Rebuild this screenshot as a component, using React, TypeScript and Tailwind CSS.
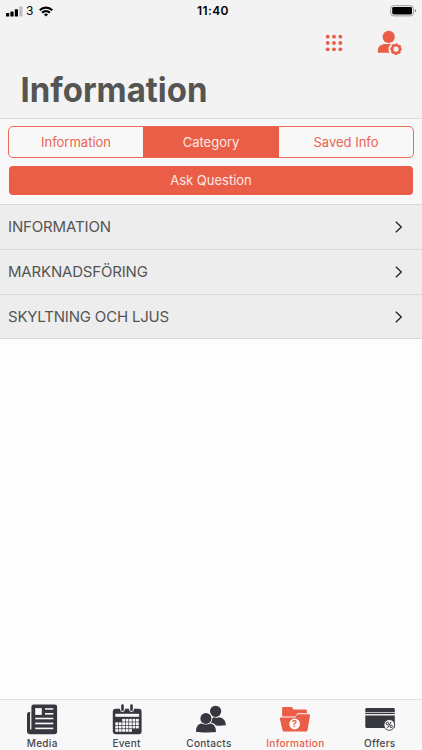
import React, { useState } from 'react'

interface Tab {
    label: string,
    icon: React.ReactNode,
}

const segments = [
    { label: 'Information', width: 'w-[134px]' },
    { label: 'Category', width: 'w-[136px]' },
    { label: 'Saved Info', width: 'w-[134px]' },
]

const categories = [
    { label: 'INFORMATION', height: 'h-[45px]', spacing: 'tracking-[-0.14px]' },
    { label: 'MARKNADSFÖRING', height: 'h-[45px]', spacing: 'tracking-[-0.18px]' },
    { label: 'SKYLTNING OCH LJUS', height: 'h-[44px] pt-px', spacing: 'tracking-[-0.18px]' },
]

function StatusBar() {
    return (
        <div className="grid h-[22px] grid-cols-3 items-center text-black">
            <div className="flex items-center pl-[6px]">
                <svg width="17" height="11" viewBox="0 0 17 11">
                    <rect x="0" y="7" width="3.2" height="3.5" rx="0.6" />
                    <rect x="4.4" y="5.5" width="3.2" height="5" rx="0.6" />
                    <rect x="8.8" y="3.2" width="3.2" height="7.3" rx="0.6" />
                    <rect x="13.3" y="0.5" width="3.2" height="10" rx="0.6" fill="#bdbdbd" />
                </svg>
                <span className="ml-[3px] w-[7px] text-[12px]">3</span>
                <svg className="ml-[6px]" width="14" height="11" viewBox="0 0 14 11" fill="none" stroke="#000" strokeWidth="2.2">
                    <path d="M0.8 4.2a8.8 8.8 0 0 1 12.4 0" />
                    <path d="M3.1 6.8a5.5 5.5 0 0 1 7.8 0" />
                    <path d="M7 10.6L4.9 8.6a3 3 0 0 1 4.2 0z" fill="#000" stroke="none" />
                </svg>
            </div>
            <div className="pl-[4px] text-center text-[12px] font-semibold tracking-[0.4px]">11:40</div>
            <div className="flex justify-end pr-[5px]">
                <svg width="27" height="12" viewBox="0 0 27 12">
                    <rect x="0.7" y="0.7" width="22.7" height="10.2" rx="2.8" fill="none" stroke="#9a9a9a" />
                    <rect x="2.2" y="2.1" width="19.8" height="7.4" rx="1.4" />
                    <path d="M24.8 4.1c1.9.4 1.9 3 0 3.4z" fill="#8a8a8a" />
                </svg>
            </div>
        </div>
    )
}

function GridIcon() {
    return (
        <svg width="18" height="18" viewBox="0 0 18 18" fill="#ea5d47">
            {[2.7, 9, 15.3].map((y) => [2.7, 9, 15.3].map((x) => <circle key={`${x}-${y}`} cx={x} cy={y} r="1.9" />))}
        </svg>
    )
}

function UserSettingsIcon() {
    return (
        <svg width="26" height="26" viewBox="0 0 26 26" fill="#ea5d47">
            <circle cx="11.7" cy="6.9" r="6.1" />
            <path d="M0.8 22.7v-2.2c0-4.4 3.4-6.6 7.7-6.6h5.8c-2.8 1.8-3.5 5.6-1.8 8.8z" />
            <circle cx="19" cy="19.1" r="3.9" fill="none" stroke="#ea5d47" strokeWidth="2.5" />
            <circle cx="19" cy="19.1" r="5.2" fill="none" stroke="#ea5d47" strokeWidth="1.3" strokeDasharray="2.6 1.484" strokeDashoffset="1.3" />
        </svg>
    )
}

function MediaIcon() {
    return (
        <svg width="32" height="32" viewBox="0 0 32 32" fill="#36373f">
            <path d="M8.5 1.4h20.3a2.3 2.3 0 0 1 2.3 2.3v24.8a2.8 2.8 0 0 1-2.8 2.8H4.2a3.3 3.3 0 0 1-3.2-3.3V11.2a2.2 2.2 0 0 1 2.2-2.2h.9v17.4h1.3V3.7a2.3 2.3 0 0 1 2.3-2.3z" />
            <g fill="#f8f8f8">
                <rect x="9.2" y="5.1" width="6.6" height="6.8" />
                <rect x="19" y="5.2" width="8.3" height="1.5" />
                <rect x="19" y="10" width="8.3" height="1.6" />
                <rect x="9.2" y="14.7" width="18.1" height="1.6" />
                <rect x="9.2" y="19.6" width="18.1" height="1.7" />
                <rect x="9.2" y="24.6" width="18.1" height="1.6" />
            </g>
        </svg>
    )
}

// cells [first, last] that each row of the calendar fills
const calendarRows = [[2, 6], [0, 6], [0, 6], [0, 4]]

function EventIcon() {
    return (
        <svg width="32" height="32" viewBox="0 0 32 32" fill="#36373f">
            <rect x="1.8" y="5.8" width="28.8" height="25.5" rx="3" />
            <rect x="4.3" y="10.8" width="23.8" height="3" fill="#f8f8f8" />
            {[11.5, 20.5].map((x) => (
                <g key={x}>
                    <rect x={x - 2.4} y="0.2" width="4.8" height="8.8" rx="2.4" fill="#f8f8f8" />
                    <rect x={x - 1.3} y="1.2" width="2.6" height="6.8" rx="1.3" />
                </g>
            ))}
            {calendarRows.map(([from, to], row) =>
                Array.from({ length: to - from + 1 }, (_, i) => (
                    <rect key={`${row}-${i}`} x={4.3 + (from + i) * 3.45} y={15.9 + row * 3.4} width="2.8" height="2.7" fill="#f8f8f8" />
                ))
            )}
        </svg>
    )
}

function ContactsIcon() {
    return (
        <svg width="32" height="32" viewBox="0 0 32 32" fill="#36373f">
            <circle cx="20.6" cy="8.3" r="5.6" />
            <path d="M16 22v-5.6c.8-1.2 1.8-2 3.6-2.2 1.8.8 2.5.8 4.4 0 4 .5 6.8 3.5 6.9 8-4 .6-10 .6-14.9-.2z" />
            <circle cx="10.9" cy="15.4" r="6.4" fill="#f8f8f8" />
            <path d="M0 30.5v-3.2c0-4.9 3-7.5 6.5-7.5h8.8c4 0 6.8 2.6 6.8 7.5v3.2z" fill="#f8f8f8" />
            <circle cx="10.9" cy="15.4" r="5.5" />
            <path d="M1.1 29.1v-1.3c0-4.3 2.2-7 5.5-7.3 2.5 1.3 6 1.3 8.6 0 3.3.3 5.7 3 5.7 7.3v1.3c-5.2.6-15 .6-19.8 0z" />
        </svg>
    )
}

function InformationIcon() {
    return (
        <svg width="32" height="32" viewBox="0 0 32 32" fill="#ea5d47">
            <path d="M3.1 13.5V5.3c0-.8.5-1.2 1.2-1.2h7.8c.8 0 1.2.4 1.6 1.1l.9 1.4h12c.8 0 1.3.5 1.3 1.3v2.3h-9.5l-2.2 3.3z" />
            <path d="M2.1 14.5h14.1l2.2-3.3h11.2c1 0 1.5.6 1.4 1.5l-2.5 14.5c-.2.9-.7 1.4-1.6 1.4H5.1c-.9 0-1.4-.5-1.6-1.4L0.9 16c-.2-.9.3-1.5 1.2-1.5z" />
            <circle cx="15.6" cy="21" r="5.4" fill="#f8f8f8" />
            <text x="15.6" y="24.2" textAnchor="middle" fontSize="9" fontWeight="700">?</text>
        </svg>
    )
}

function OffersIcon() {
    return (
        <svg width="32" height="32" viewBox="0 0 32 32" fill="#36373f">
            <path d="M1.3 9.1V6.5c0-.9.6-1.5 1.5-1.5h26.5c.9 0 1.5.6 1.5 1.5v2.6z" />
            <path d="M1.3 9.7h29.5v1.4H1.3z" />
            <path d="M1.3 12.4h29.5v11c0 .9-.6 1.5-1.5 1.5H2.8c-.9 0-1.5-.6-1.5-1.5z" />
            <circle cx="25.3" cy="21.9" r="5.4" fill="#f8f8f8" stroke="#36373f" strokeWidth="0.9" />
            <g fill="none" stroke="#36373f">
                <circle cx="23.4" cy="20.5" r="1.2" />
                <circle cx="27.2" cy="23.4" r="1.2" />
                <path d="M27.1 19l-3.6 5.9" />
            </g>
        </svg>
    )
}

const tabs: Tab[] = [
    { label: 'Media', icon: <MediaIcon /> },
    { label: 'Event', icon: <EventIcon /> },
    { label: 'Contacts', icon: <ContactsIcon /> },
    { label: 'Information', icon: <InformationIcon /> },
    { label: 'Offers', icon: <OffersIcon /> },
]

export default function App() {
    const [segment, setSegment] = useState('Category')
    const [tab, setTab] = useState('Information')

    return (
        <div className="flex h-[750px] w-[422px] flex-col overflow-hidden bg-[#fdfdfd] font-[Inter,'Liberation_Sans',sans-serif] text-[#555553]">
            <header className="flex h-[119px] flex-col border-b border-[#dadcdc] bg-[#f3f3f3]">
                <StatusBar />
                <div className="flex h-[42px] items-center justify-end gap-[34px] pr-[19px]">
                    <button><GridIcon /></button>
                    <button><UserSettingsIcon /></button>
                </div>
                <h1 className="pt-[5px] pl-[20px] text-[34px] leading-[42px] font-bold">
                    <svg className="block overflow-visible" width="187" height="42" fill="#555553">
                        <text x="0.5" y="33" textLength="187" lengthAdjust="spacingAndGlyphs">Information</text>
                    </svg>
                </h1>
            </header>

            <div className="flex h-[86px] flex-col gap-[8px] border-b border-[#d6d8d8] bg-[#f8f8f8] px-[8px] pt-[7px]">
                <div className="flex h-[32px] overflow-hidden rounded-[5px] border border-[#ea6a56]">
                    {segments.map((s) => (
                        <button
                            key={s.label}
                            onClick={() => setSegment(s.label)}
                            className={`pt-[2px] text-[13px] ${s.width} ${s.label === segment ? 'bg-[#ea5d47] text-[#fde9e5]' : 'text-[#e56652]'}`}
                        >
                            {s.label}
                        </button>
                    ))}
                </div>
                <button className="mx-px h-[29px] rounded-[4px] bg-[#ea5d47] pt-px text-[13px] text-[#fde9e5]">Ask Question</button>
            </div>

            <main className="flex-1">
                {categories.map((c) => (
                    <div key={c.label} className={`flex items-center justify-between border-b border-[#d9d9d9] bg-[#ededed] pr-[19px] pl-[8px] ${c.height}`}>
                        <span className={`text-[15px] ${c.spacing}`}>{c.label}</span>
                        <svg width="8" height="12" viewBox="0 0 8 12" fill="none" stroke="#222" strokeWidth="1.3">
                            <path d="M0.8 0.7L6.3 6L0.8 11.3" />
                        </svg>
                    </div>
                ))}
            </main>

            <nav className="grid h-[51px] grid-cols-5 border-t border-[#dedede] bg-[#f8f8f8]">
                {tabs.map((t) => (
                    <button
                        key={t.label}
                        onClick={() => setTab(t.label)}
                        className={`flex flex-col items-center pt-[3px] text-[10px] leading-[14px] font-medium tracking-[0.3px] ${t.label === tab ? 'text-[#ea5d47]' : 'text-[#45464c]'}`}
                    >
                        {t.icon}
                        <span className={t.label === 'Contacts' ? 'mt-px mr-[4px]' : 'mt-px'}>{t.label}</span>
                    </button>
                ))}
            </nav>
        </div>
    )
}
